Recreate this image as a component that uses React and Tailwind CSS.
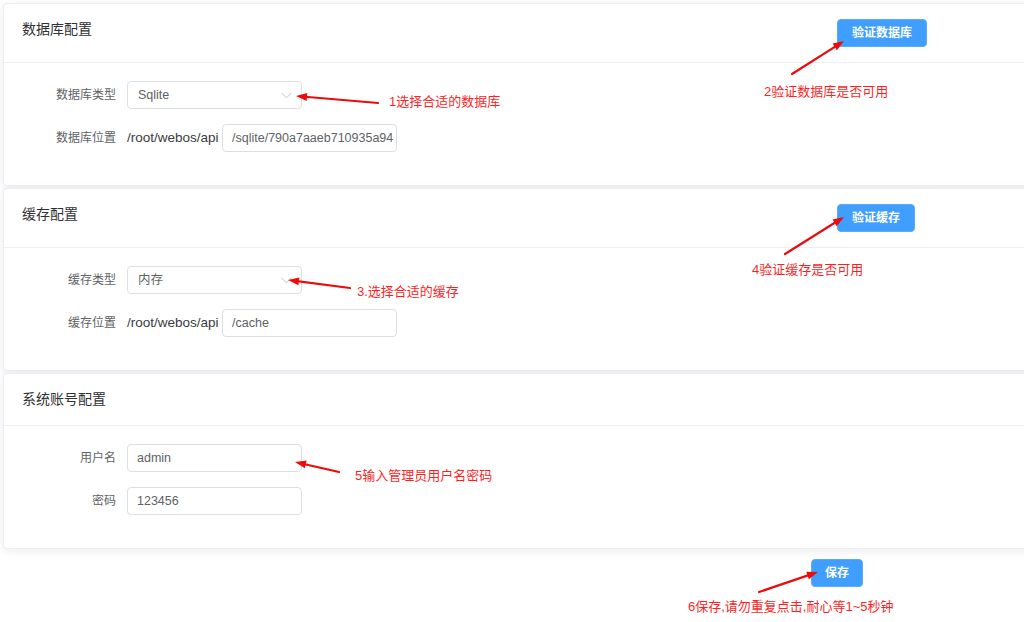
import React from 'react';

const font = { fontFamily: '"Liberation Sans", "Noto Sans CJK SC", sans-serif' };

function Chevron() {
  return (
    <svg width="11" height="7" viewBox="0 0 11 7" className="text-[#c0c4cc]">
      <polyline points="0.5,0.8 5.5,5.8 10.5,0.8" fill="none" stroke="currentColor" strokeWidth="1" />
    </svg>
  );
}

function Card({ title, action, children }) {
  return (
    <div className="ml-[3px] w-[1040px] bg-white border border-[#ebeef5] rounded-[4px] shadow-[0_2px_10px_0_rgba(0,0,0,0.08)]">
      <div className="flex items-start pl-[18px] pt-[14px] pb-[15px] border-b border-[#ebeef5]">
        <div className="w-[815px] text-[14px] leading-[22px] text-[#303133]">{title}</div>
        {action && (
          <button className="mt-[1px] h-[28px] px-[14px] rounded-[4px] bg-[#409eff] border border-[#5aabfa] text-white text-[12px] font-bold">
            {action}
          </button>
        )}
      </div>
      <div className="flex flex-col gap-[15px] pt-[18px] pb-[33px]">{children}</div>
    </div>
  );
}

function Row({ label, children }) {
  return (
    <div className="flex items-center h-[28px]">
      <div className="w-[112px] text-right text-[12px] text-[#606266]">{label}</div>
      <div className="ml-[11px] flex items-center">{children}</div>
    </div>
  );
}

function Select({ value }) {
  return (
    <div className="w-[175px] h-[28px] flex items-center justify-between pl-[10px] pr-[9px] border border-[#dcdfe6] rounded-[4px] text-[12.5px] text-[#606266]">
      <span>{value}</span>
      <Chevron />
    </div>
  );
}

function Input({ value }) {
  return (
    <div className="w-[175px] h-[28px] flex items-center pl-[9px] pr-[6px] border border-[#dcdfe6] rounded-[4px] text-[12.5px] text-[#606266] overflow-hidden whitespace-nowrap">
      {value}
    </div>
  );
}

function PathInput({ value }) {
  return (
    <>
      <span className="w-[95px] text-[13.5px] font-normal text-[#3a3b3e] whitespace-nowrap">/root/webos/api</span>
      <Input value={value} />
    </>
  );
}

function Arrow({ x1, y1, x2, y2 }) {
  // arrow from (x1,y1) tail to (x2,y2) tip
  const dx = x2 - x1;
  const dy = y2 - y1;
  const len = Math.hypot(dx, dy);
  const ux = dx / len;
  const uy = dy / len;
  const hl = 11;
  const hw = 4;
  const bx = x2 - ux * hl;
  const by = y2 - uy * hl;
  const pts = `${x2},${y2} ${bx - uy * hw},${by + ux * hw} ${bx + uy * hw},${by - ux * hw}`;
  return (
    <g>
      <line x1={x1} y1={y1} x2={bx + ux * 2} y2={by + uy * 2} stroke="#ee0a0a" strokeWidth="2.2" strokeLinecap="round" />
      <polygon points={pts} fill="#ee0a0a" />
    </g>
  );
}

const notes = [
  { text: '1选择合适的数据库', left: 389, top: 93 },
  { text: '2验证数据库是否可用', left: 764, top: 83 },
  { text: '3.选择合适的缓存', left: 357, top: 283 },
  { text: '4验证缓存是否可用', left: 752, top: 261 },
  { text: '5输入管理员用户名密码', left: 355, top: 467 },
  { text: '6保存,请勿重复点击,耐心等1~5秒钟', left: 688, top: 598 },
];

export default function App() {
  return (
    <div className="relative w-[1024px] h-[622px] overflow-hidden bg-white" style={font}>
      <div className="pt-[3px] flex flex-col gap-[2px]">
        <Card title="数据库配置" action="验证数据库">
          <Row label="数据库类型">
            <Select value="Sqlite" />
          </Row>
          <Row label="数据库位置">
            <PathInput value="/sqlite/790a7aaeb710935a94" />
          </Row>
        </Card>
        <Card title="缓存配置" action="验证缓存">
          <Row label="缓存类型">
            <Select value="内存" />
          </Row>
          <Row label="缓存位置">
            <PathInput value="/cache" />
          </Row>
        </Card>
        <Card title="系统账号配置">
          <Row label="用户名">
            <Input value="admin" />
          </Row>
          <Row label="密码">
            <Input value="123456" />
          </Row>
        </Card>
        <div className="flex pt-[8px]">
          <button className="ml-[811px] w-[52px] h-[28px] rounded-[4px] bg-[#409eff] border border-[#5aabfa] text-white text-[12px] font-bold">
            保存
          </button>
        </div>
      </div>

      <svg className="absolute inset-0 pointer-events-none" width="1024" height="622">
        <Arrow x1={378} y1={103} x2={296} y2={96} />
        <Arrow x1={792} y1={74} x2={844} y2={41} />
        <Arrow x1={350} y1={288} x2={288} y2={280} />
        <Arrow x1={785} y1={254} x2={844} y2={217} />
        <Arrow x1={339} y1={472} x2={295} y2={462} />
        <Arrow x1={759} y1={592} x2={818} y2={572} />
      </svg>

      {notes.map((n) => (
        <div
          key={n.text}
          className="absolute text-[13px] leading-[18px] text-[#ff1f1f] whitespace-nowrap"
          style={{ left: n.left, top: n.top }}
        >
          {n.text}
        </div>
      ))}
    </div>
  );
}
